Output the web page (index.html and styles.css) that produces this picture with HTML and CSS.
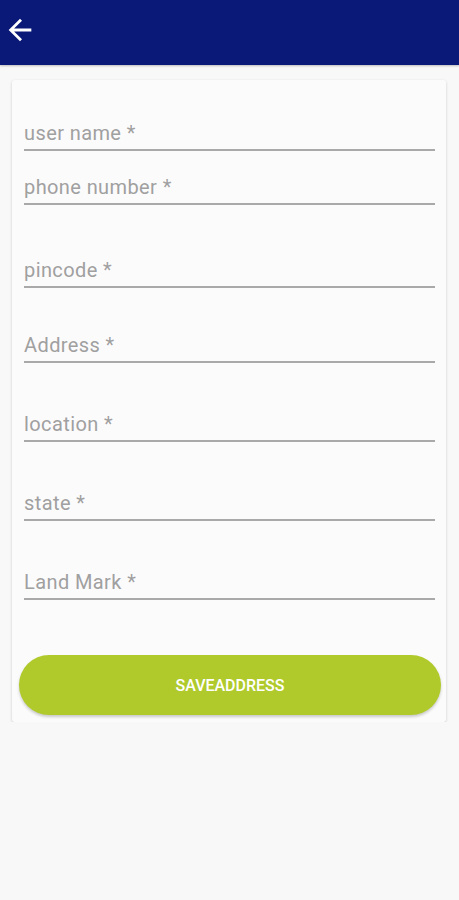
FILE: index.html
```html
<!DOCTYPE html>
<html lang="en">
<head>
  <meta charset="UTF-8" />
  <meta name="viewport" content="width=device-width, initial-scale=1.0"/>
  <title>Save Address</title>
  <link rel="stylesheet" href="styles.css">
</head>
<body>
  <header class="topbar">
    <button class="back" aria-label="Back">
      <svg width="34" height="34" viewBox="0 0 24 24">
        <path d="M20 11H7.83l5.59-5.59L12 4l-8 8 8 8 1.41-1.41L7.83 13H20v-2z" fill="#fff"/>
      </svg>
    </button>
  </header>

  <main class="card">
    <div class="field"><span class="label">user name *</span></div>
    <div class="field near"><span class="label">phone number *</span></div>
    <div class="field wide"><span class="label">pincode *</span></div>
    <div class="field mid"><span class="label">Address *</span></div>
    <div class="field"><span class="label">location *</span></div>
    <div class="field"><span class="label">state *</span></div>
    <div class="field"><span class="label">Land Mark *</span></div>

    <button class="save">SAVEADDRESS</button>
  </main>
</body>
</html>
```

FILE: styles.css
```css
body {
  margin: 0;
  background: #f8f8f9;
  font-family: Roboto, "Noto Sans", sans-serif;
}
.topbar {
  height: 65px;
  background: #0a1878;
  box-shadow: 0 1px 2px rgba(0, 0, 0, 0.25);
  display: flex;
  align-items: flex-start;
}
.back {
  background: none;
  border: none;
  padding: 0;
  margin: 13px 0 0 3px;
  width: 34px;
  height: 34px;
  cursor: pointer;
}
.back svg {
  display: block;
}
.card {
  margin: 15px 13px 0 12px;
  padding: 41px 11px 7px 12px;
  background: #fcfbfc;
  border-radius: 3px;
  box-shadow: 0 1px 3px rgba(0, 0, 0, 0.18);
  display: flex;
  flex-direction: column;
}
.field {
  margin-top: 49px;
  padding-bottom: 4px;
  border-bottom: 2px solid #a9a9a9;
}
.field:first-child {
  margin-top: 0;
}
.field.near {
  margin-top: 24px;
}
.field.wide {
  margin-top: 53px;
}
.field.mid {
  margin-top: 45px;
}
.label {
  display: block;
  font-size: 20px;
  line-height: 24px;
  letter-spacing: 0.4px;
  color: #a0a0a0;
}
.save {
  margin: 55px -6px 0 -5px;
  padding-top: 2px;
  height: 60px;
  border: none;
  border-radius: 30px;
  background: #b0ca2b;
  color: #fff;
  font-family: Roboto, sans-serif;
  font-weight: 500;
  font-size: 16px;
  box-shadow: 0 2px 3px rgba(0, 0, 0, 0.2);
  cursor: pointer;
}
```
